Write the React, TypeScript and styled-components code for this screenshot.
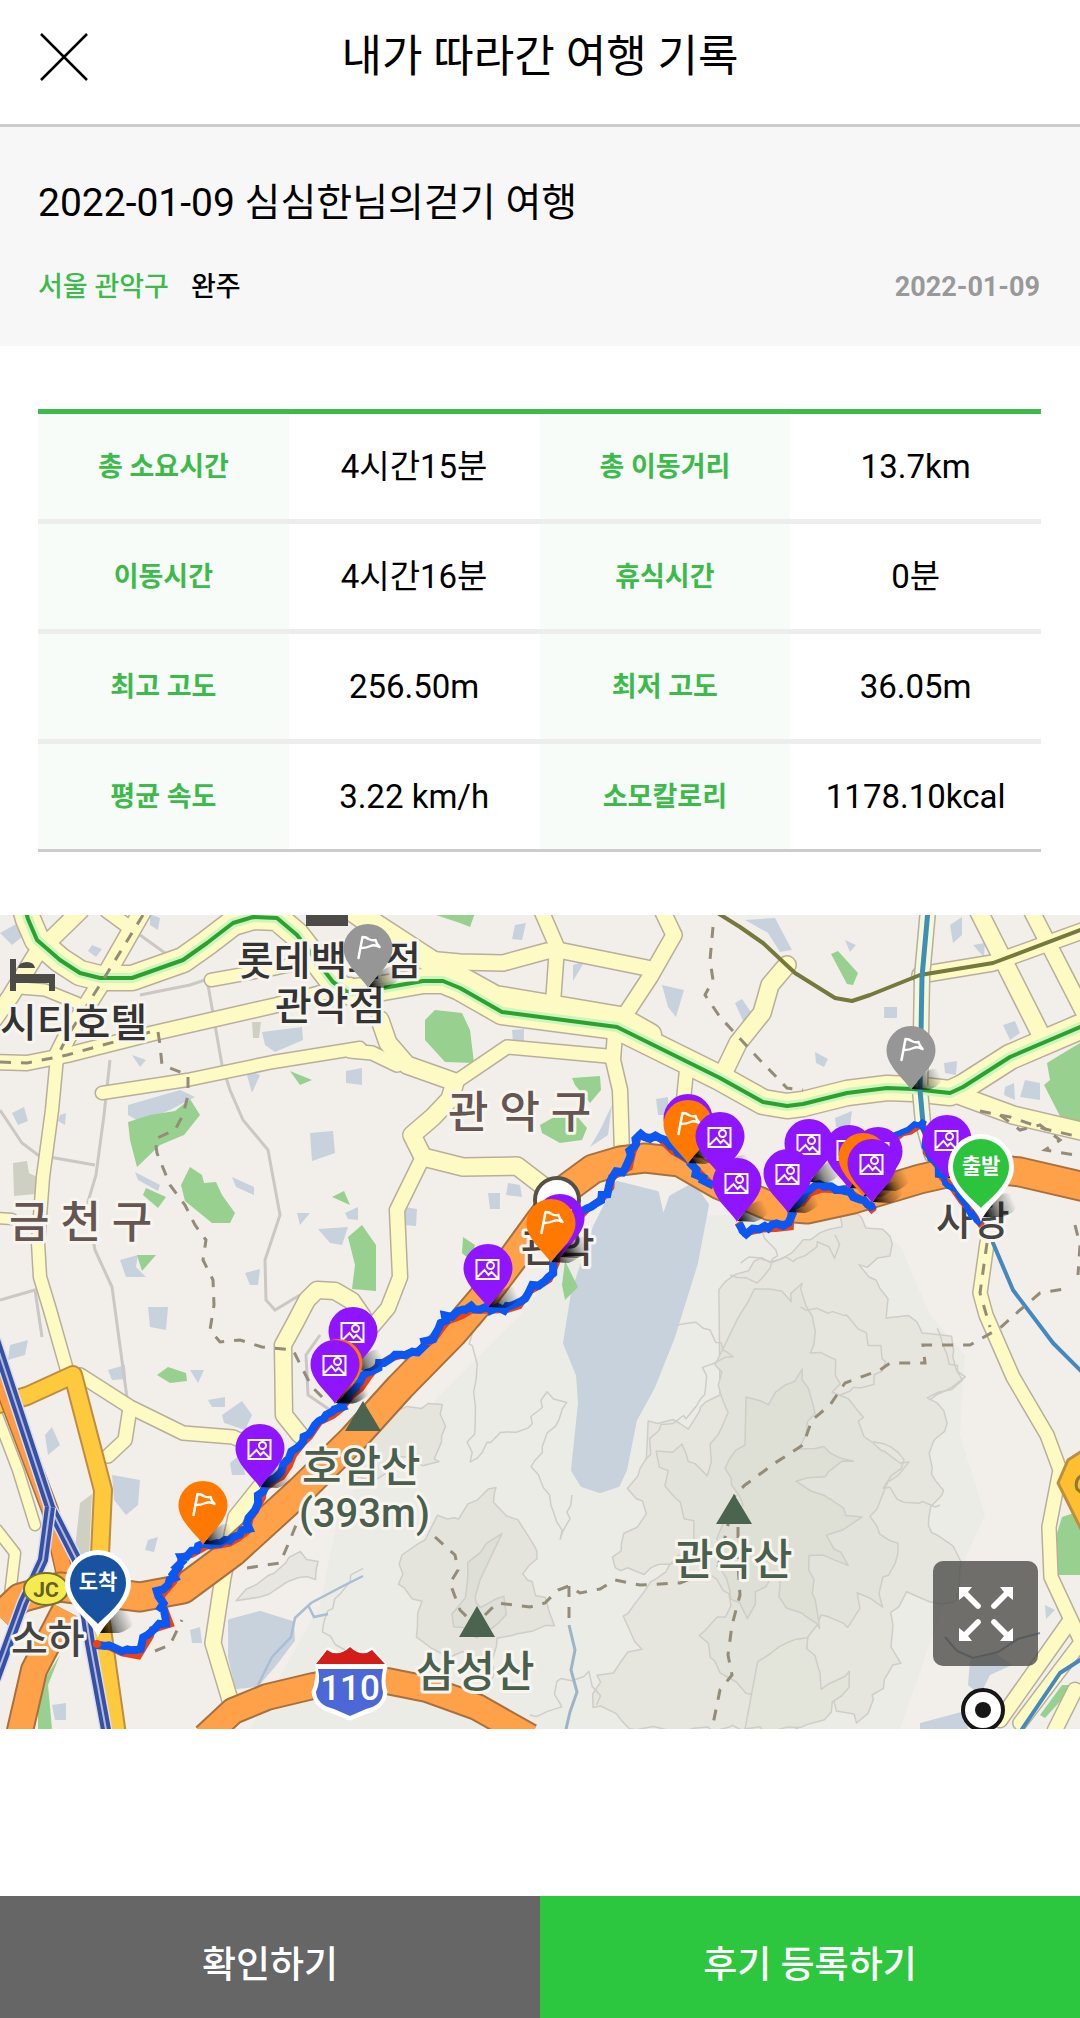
import React from 'react';
import styled, { createGlobalStyle } from 'styled-components';

const GlobalStyle = createGlobalStyle`
  *, *::before, *::after { box-sizing: border-box; }
  body {
    margin: 0;
    background: #fff;
    color: #000;
    font-family: Roboto, "Noto Sans CJK KR", sans-serif;
  }
  button { font: inherit; border: 0; padding: 0; cursor: pointer; }
`;

const Page = styled.div`
  display: flex;
  flex-direction: column;
  min-height: 100vh;
`;

const Header = styled.header`
  display: grid;
  grid-template-columns: 48px 1fr 48px;
  align-items: center;
  height: 127px;
  padding: 0 40px 10px;
  border-bottom: 3px solid #ccc;
`;

const CloseButton = styled.button`
  display: flex;
  background: none;
`;

const PageTitle = styled.h1`
  margin: 0;
  font-size: 44px;
  line-height: 60px;
  font-weight: 400;
  text-align: center;
`;

const Summary = styled.section`
  display: flex;
  flex-direction: column;
  gap: 34px;
  padding: 46px 40px 39px 38px;
  background: #f7f7f7;
`;

const TripTitle = styled.h2`
  margin: 0;
  font-size: 39px;
  line-height: 60px;
  font-weight: 400;
`;

const Meta = styled.div`
  display: flex;
  gap: 22px;
  font-size: 27px;
  line-height: 40px;
  font-weight: 500;
`;

const Region = styled.span`
  color: #3cbb4b;
`;

const TripDate = styled.time`
  margin-left: auto;
  color: #999;
  font-weight: 700;
`;

const StatsSection = styled.section`
  padding: 63px 39px 63px 38px;
`;

const StatsTable = styled.table`
  width: 100%;
  table-layout: fixed;
  border-spacing: 0;
  border-top: 5px solid #3cbb4b;
`;

const StatRow = styled.tr`
  > * {
    height: 110px;
    padding: 0;
    line-height: 40px;
    text-align: center;
    border-bottom: 5px solid #ededed;
  }
  &:last-child > * {
    height: 108px;
    border-bottom: 3px solid #ccc;
  }
`;

const StatLabel = styled.th`
  background: #f7fcf8;
  color: #3cbb4b;
  font-size: 27px;
  font-weight: 700;
`;

const StatValue = styled.td`
  font-size: 33px;
`;

const MapFrame = styled.section`
  position: relative;
  aspect-ratio: 1080 / 814;
  overflow: hidden;
  background: #f2efe9;
`;

const MapDrawing = styled.svg`
  display: block;
  width: 100%;
  height: 100%;
`;

const PinButton = styled.button<{ $x: number; $y: number }>`
  position: absolute;
  left: ${p => (p.$x / 1080) * 100}%;
  top: ${p => (p.$y / 814) * 100}%;
  display: flex;
  background: none;
  transform: translate(-50%, -100%);
  svg { display: block; overflow: visible; }
`;

const EndText = styled.span`
  position: absolute;
  top: 18px;
  left: 0;
  width: 100%;
  color: #fff;
  font-size: 21px;
  line-height: 28px;
  font-weight: 700;
  text-align: center;
`;

const ExpandButton = styled.button`
  position: absolute;
  right: 42px;
  bottom: 63px;
  display: grid;
  place-items: center;
  width: 105px;
  height: 105px;
  border-radius: 10px;
  background: rgba(78, 77, 74, 0.8);
`;

const Actions = styled.footer`
  display: grid;
  grid-template-columns: 1fr 1fr;
  margin-top: auto;
`;

const ActionButton = styled.button<{ $primary?: boolean }>`
  height: 122px;
  padding-top: 10px;
  background: ${p => (p.$primary ? '#2cc73e' : '#666')};
  color: #fff;
  font-size: 37px;
  font-weight: 500;
`;

const stats = [
  ['총 소요시간', '4시간15분', '총 이동거리', '13.7km'],
  ['이동시간', '4시간16분', '휴식시간', '0분'],
  ['최고 고도', '256.50m', '최저 고도', '36.05m'],
  ['평균 속도', '3.22 km/h', '소모칼로리', '1178.10kcal'],
];

type Pt = [number, number];

const pts = (s: string): Pt[] =>
  s.split(' ').map(p => p.split(',').map(Number) as Pt);

const noise = (seed: number) => {
  let s = seed * 9301 + 49297;
  return () => {
    s = (s * 9301 + 49297) % 233280;
    return s / 233280 - 0.5;
  };
};

/* Breaks a line into short steps, each shifted a little, like a GPS track. */
const track = (s: string, seed: number, amp: number, step = 5) => {
  const src = pts(s);
  const r = noise(seed);
  const out: string[] = [];
  src.slice(1).forEach((b, i) => {
    const a = src[i];
    const n = Math.max(1, Math.round(Math.hypot(b[0] - a[0], b[1] - a[1]) / step));
    for (let k = 0; k < n; k++) {
      out.push(
        `${(a[0] + ((b[0] - a[0]) * k) / n + r() * amp).toFixed(1)},${(a[1] + ((b[1] - a[1]) * k) / n + r() * amp).toFixed(1)}`,
      );
    }
  });
  out.push(src[src.length - 1].join(','));
  return out.join(' ');
};

const greenLine =
  '24,-10 28,4 37,25 60,45 80,58 100,63 132,63 183,45 207,28 233,8 253,2 277,3 297,20 333,67 347,77 383,73 423,66 443,66 460,73 502,97 617,112 720,163 763,187 787,191 803,189 847,178 887,173 913,174 950,178 963,172 1010,142 1080,112';
const oliveLine =
  '716,-3 740,12 763,28 795,58 835,83 852,86 870,80 920,60 993,48 1080,15';
const mainHighway =
  '0,702 20,683 60,672 140,682 183,674 233,637 300,576 353,524 400,472 453,418 482,384 513,343 540,306 563,276 593,254 620,246 645,243 680,247 720,270 770,291 807,294 853,284 920,264 973,252 1020,257 1085,272';
const river = '928,-5 922,62 920,175 923,208 932,240';
const southHighway =
  '205,822 233,796 267,782 313,771 350,765 387,766 427,774 477,792 530,822';

const roads: [string, number][] = [
  [greenLine, 24],
  ['340,-14 367,5 430,46 495,82 620,103 650,120', 22],
  ['427,44 460,47 503,48 547,36 563,36 647,53', 15],
  ['541,-5 557,32 553,88', 14],
  ['662,-5 674,20 650,62 625,100', 15],
  ['615,118 613,145 620,175 622,238', 14],
  ['607,141 507,132 460,164', 13],
  ['380,105 388,128 407,150 455,167 450,184 433,202 412,220 423,242 463,252 517,251 547,274', 17],
  ['350,136 372,138 397,150', 13],
  ['421,246 397,295 400,362 388,393 372,412', 14],
  ['102,178 187,165 273,147 360,133', 12],
  ['-5,147 27,148 67,140 150,119 277,90 350,70', 14],
  ['211,65 277,53 345,38', 12],
  ['57,142 52,195 43,262 38,328 40,362 50,395 67,455', 12],
  ['143,-5 103,65 67,122 57,142', 17],
  ['80,-4 37,38 10,82 -6,104', 16],
  ['20,73 45,75 77,88', 11],
  ['107,-4 133,15', 13],
  ['363,402 352,386 335,376 317,375 307,385 295,408 283,430 284,500 300,520', 16],
  ['80,460 130,492 183,518 233,522 262,535', 13],
  ['130,493 125,525 108,541', 13],
  ['260,572 236,602 223,662 213,728 233,795', 15],
  ['978,-5 1045,128', 17],
  ['1031,-5 1085,100', 15],
  ['920,60 993,48 1085,15', 15],
  ['787,50 770,70 762,98 738,128 724,157', 17],
  ['687,150 683,190', 13],
  ['953,178 1013,200 1085,217', 17],
  ['987,328 980,378 986,400 1013,462 1047,520 1060,555 1049,612 1051,662 1085,735', 13],
  ['1070,706 1000,805', 14],
  ['1085,722 1020,808', 13],
  ['1075,775 1055,815', 14],
  ['-3,615 15,638 10,680', 10],
  ['-3,500 18,555 35,610', 10],
  ['-3,303 12,304', 10],
];

const lanes = [
  '110,145 104,200 96,260 87,290 95,335 112,372 128,490',
  '208,70 222,150 230,175 243,205 268,235 280,300 265,345 266,385 275,395 300,380',
  '0,195 22,228 38,240 95,250',
  '0,385 35,375 42,422',
  '140,80 190,70 214,62',
  '140,20 165,38',
  '320,420 306,440 308,480 330,495',
];

const greens = [
  '128,207 150,200 175,196 190,184 200,200 184,220 160,230 137,252 130,225',
  '190,252 202,260 204,268 216,267 222,280 235,298 230,308 212,308 185,286 181,270',
  '146,273 166,282 158,293 143,280',
  '137,340 156,340 142,356',
  '290,156 312,165 300,170',
  '332,282 344,276 350,290',
  '348,322 362,310 376,330 376,376 352,374 355,350',
  '425,105 435,95 462,98 470,115 474,148 445,147 425,125',
  '572,163 600,161 601,175 590,188 575,170',
  '540,210 570,193 587,213 582,225 560,228 542,218',
  '831,39 838,36 858,58 853,70 847,69',
  '1080,128 1060,140 1047,148 1050,165 1044,170 1062,205 1080,209',
  '565,346 578,372 565,385 562,370',
  '157,460 168,452 186,458 187,466 170,468',
  '1080,596 1062,602 1055,625 1056,660 1080,660',
  '463,322 475,330 470,345 462,338',
  '430,-2 475,-2 470,12 460,8',
  '1075,770 1045,803 1040,800 1062,770',
  '60,740 48,770 52,814 38,814 38,775',
];

const waters = [
  '617,268 657,278 663,305 671,282 693,270 707,290 696,348 673,422 653,472 635,505 625,555 618,570 600,576 582,570 573,555 580,488 578,460 565,428 573,378 595,312',
  '230,706 260,698 292,708 293,725 274,750 257,770 237,772 230,742',
];

const buildings = [
  '0,18 18,8 22,22 12,30', '92,30 102,34 96,42 88,36', '262,117 302,112 303,125 275,137 265,130',
  '310,218 333,216 335,238 312,246', '346,156 362,153 362,170 346,168', '128,190 180,175 195,182 170,195 140,207 128,200',
  '132,140 146,145 140,152', '12,198 24,192 28,206 18,210', '318,314 348,312 342,330 330,328',
  '245,153 260,160 252,178', '232,262 254,272 254,280 236,272', '135,257 160,270 158,276 138,265',
  '345,298 358,292 358,305 348,304', '297,298 310,298 300,310', '120,345 138,340 136,352 146,362 126,362',
  '245,358 260,354 258,370 250,370', '148,392 168,392 166,415 150,412', '60,200 66,198 65,210 58,206',
  '515,10 526,8 522,25 512,24', '512,115 524,114 524,128 513,128', '488,278 500,278 500,294 490,294',
  '404,292 417,294 416,311 404,310', '508,268 520,270 522,282 506,280', '600,215 612,190 608,220 590,232',
  '656,184 668,182 668,200 658,200', '662,70 684,75 676,102 668,92', '573,50 585,46 573,66',
  '845,25 856,30 850,37', '884,92 897,92 897,103 884,103', '735,88 742,84 753,100 745,110',
  '815,137 828,144 824,152 816,148', '1003,110 1015,106 1020,118 1010,125', '950,10 962,2 962,20 953,28',
  '973,30 985,28 984,42', '1025,165 1040,168 1040,185 1020,182', '835,203 852,196 850,212 836,212',
  '944,148 957,146 956,160 945,158', '745,5 775,3 792,35 780,37 768,18', '1005,172 1014,168 1015,185 1004,180',
  '108,455 125,450 126,464 112,465', '112,560 140,565 138,590 126,600 114,585', '45,520 52,512 60,530 48,540',
  '222,500 242,486 252,500 245,515 224,508', '230,548 242,538 245,560 232,560', '148,625 158,622 154,637 145,635',
  '190,715 200,712 202,728 192,728', '10,430 28,425 25,440 8,445', '208,485 225,482 225,492 212,492',
  '970,745 995,738 1012,750 990,760 980,780 968,770', '920,808 965,796 968,814 920,814', '1045,690 1055,695 1046,704',
  '150,-1 160,3 158,15 150,10', '190,455 204,455 198,468', '52,790 66,788 66,805 55,805',
];

const slopes: [string, string, number][] = [
  ['720,378 728,365 748,355 760,340 778,345 798,328 815,325 842,312 842,290 860,305 890,320 892,345 860,352 880,375 890,400 905,400 925,415 950,425 963,465 930,480 950,505 925,540 945,575 925,610 965,645 958,680 930,690 905,680 890,700 897,745 880,770 860,805 820,780 800,814 640,814 595,790 600,760 640,735 620,705 650,670 690,640 640,655 612,655 620,625 645,600 630,570 645,540 650,505 690,510 700,490 720,480', '#e6e6df', 2],
  ['740,400 755,375 770,370 790,385 800,365 815,410 810,440 840,445 835,480 865,500 860,520 905,550 885,580 870,600 900,640 880,665 885,690 860,680 850,710 820,700 800,740 790,800 720,760 700,720 735,690 700,650 690,610 670,580 660,540 680,530 705,560 715,520 730,500 715,450', '#e2e3db', 3],
  ['750,480 770,490 785,470 800,455 815,500 800,530 855,545 800,570 860,605 830,620 845,650 810,640 823,710 790,690 770,660 745,700 725,665 720,620 740,590 725,550 745,530', '#dedfd5', 4],
  ['760,745 805,720 822,770 850,760 830,800 800,814 745,814', '#e3e4da', 9],
  ['434,600 455,607 475,585 495,570 495,590 515,605 530,628 540,635 520,655 545,685 555,710 530,715 500,725 490,765 465,740 440,740 412,725 420,690 400,670 405,640 425,625', '#e4e3dc', 5],
  ['500,620 472,645 465,670 450,710 480,720 510,700 505,685 475,690 480,665', '#dedfd6', 6],
  ['385,500 440,488 448,510 435,550 400,540 375,570 350,560', '#e5e4dd', 7],
  ['237,682 275,655 300,640 322,645 315,665 285,665 260,682', '#e8e6e0', 8],
];

const ridges = [
  '480,402 472,425 476,470 468,545 500,520 525,515 548,480 565,485 545,530 530,555 552,590 564,625 572,580',
  '675,412 700,405 712,425 730,440 705,450 708,480 690,500 660,510 645,545',
  '800,395 850,400 888,447 870,470 840,480',
  '938,410 945,440 965,465 930,485',
  '875,525 905,545 880,570 915,590 940,590',
  '600,790 590,760 555,770 560,795 530,800',
  '360,655 330,690 320,720 345,735',
  '760,320 780,340 755,365 730,360',
  '740,345 800,345 820,330 838,340 835,320',
];

const trails = [
  '158,117 160,130 162,150 188,160 188,180 183,200 175,215 155,224 157,238 170,270 185,290 195,310 206,325 203,345 213,365 214,390 210,415 220,427 240,425 262,432 293,435 303,455 312,472 325,485',
  '435,622 455,640 458,655 450,668 460,695 470,705',
  '485,700 497,688 530,692 545,688 558,675 569,671 580,678 600,674 615,665 640,670 680,668 700,660',
  '569,671 569,710', '718,652 735,580 745,570 775,548 803,530 812,505 830,490 845,468 880,455 890,448 925,448 923,430 970,430 1000,413 1020,395 1040,378 1070,373',
  '738,612 738,650 740,680 732,710 728,740 732,760 720,775 712,814',
  '713,12 710,45 713,65 705,80 720,102 757,142 787,173 803,175',
  '247,653 280,648 290,625 298,605', '180,685 200,670 225,655', '155,736 170,730 182,705',
  '980,196 1010,202 1045,214 1080,222', '1000,200 1020,215 1040,210 1060,225 1045,235 1075,240', '1075,310 1080,330 1078,360',
];

const route = [
  '97,729 110,732 137,737 147,720 153,713 168,708 163,692 159,678 173,663 183,642 203,630 227,626 247,612 255,592 263,572 280,558 293,538 307,518 320,507 340,492 367,458 390,443 420,435 433,422 447,402 470,392 493,395 517,390 530,375 550,362 553,345 563,315 587,292 603,282 613,262 627,252 630,235 640,220 660,223 673,233 687,242 697,258 713,270',
  '737,308 743,318 763,313 787,308 792,292 807,275 820,270 847,277 863,285 873,295',
  '890,224 900,218 922,207 927,235 943,262 960,282 981,309',
];

const placeNames: [string, number, number, number, string][] = [
  ['시티호텔', 0, 122, 40, '#333'],
  ['롯데백화점', 237, 60, 40, '#333'],
  ['관악점', 275, 105, 40, '#333'],
  ['금 천 구', 9, 323, 44, '#655653'],
  ['관 악 구', 448, 213, 44, '#655653'],
  ['관악', 521, 347, 40, '#4b423f'],
  ['사당', 936, 320, 40, '#444'],
  ['소하', 11, 738, 40, '#444'],
  ['호암산', 302, 567, 43, '#4a5f4e'],
  ['(393m)', 299, 612, 40, '#4a5f4e'],
  ['삼성산', 416, 772, 43, '#4a5f4e'],
  ['관악산', 674, 660, 43, '#4a5f4e'],
];

const MapArtwork = () => (
  <MapDrawing viewBox="0 0 1080 814" preserveAspectRatio="xMidYMid slice" aria-hidden="true">
    <rect width="1080" height="814" fill="#f2efea" />
    <path d="M440 814L250 814L320 690L340 590L440 480L520 400L600 300L720 300L850 300L900 330L930 400L965 440L960 520L985 600L940 700L900 814Z" fill="#ecece7" />
    <g stroke="#cfcdc8" strokeWidth="1.5" strokeLinejoin="round">
      {slopes.map(([p, fill, seed]) => <polygon key={p} points={track(p, seed, 9, 11)} fill={fill} />)}
      {ridges.map((p, i) => <polyline key={p} points={track(p, i + 5, 8, 9)} fill="none" />)}
    </g>
    <g fill="#c7d2dd">
      {waters.map(p => <polygon key={p} points={p} strokeLinejoin="round" stroke="#c7d2dd" strokeWidth="4" />)}
      {buildings.map(p => <polygon key={p} points={p} />)}
    </g>
    <g fill="#cfd0c4">
      <path d="M13 248l14-2 2 12 8 4-1 17-22 2zM80 588l12-9-3 65-15-2zM252 107h9l-2 16h-6z" />
    </g>
    <g fill="#98d08f">{greens.map(p => <polygon key={p} points={p} />)}</g>
    <path d="M258 770l14-28 19-20 4-19 16-15 32-17 20-10M308 690l6 12 14-3" fill="none" stroke="#a9bdd4" strokeWidth="2.5" />
    <path d="M945 722l12 14 16 7 25-6 20-13 22-6" fill="none" stroke="#8093a8" strokeWidth="2" />
    <path d="M569 710l6 25-4 20 6 22-7 20-4 17" fill="none" stroke="#9bb5c8" strokeWidth="3" />
    <g fill="none" stroke="#cbc8c4" strokeWidth="3">{lanes.map(p => <polyline key={p} points={p} />)}</g>

    <g fill="none" strokeLinejoin="round" strokeLinecap="round">
      {roads.map(([p, w]) => <polyline key={p} points={p} stroke="#b8ae9c" strokeWidth={w + 3} />)}
      {roads.map(([p, w]) => <polyline key={p} points={p} stroke="#fefac4" strokeWidth={w} />)}
      <polyline points={river} stroke="#b8ae9c" strokeWidth="17" />
      <polyline points={river} stroke="#f6f8dc" strokeWidth="14" />
      <polyline points={greenLine} stroke="#cdf5bd" strokeWidth="10" />
      <polyline points={greenLine} stroke="#2ba22e" strokeWidth="4" />
      <polyline points={oliveLine} stroke="#75793c" strokeWidth="4" />
      <polyline points={river} stroke="#3f8eb4" strokeWidth="5" />
      <polyline points="993,328 1013,375 1053,428 1085,460" stroke="#4389c0" strokeWidth="4" />
      <polyline points="1022,814 1060,758 1085,742" stroke="#4389c0" strokeWidth="4" />
    </g>
    <g fill="none" stroke="#948b78" strokeWidth="3" strokeDasharray="11 10">
      {trails.map(p => <polyline key={p} points={p} />)}
      <polyline points="143,0 103,65 67,122 57,142" />
      <polyline points="0,147 27,148 67,140 150,117" />
      <polyline points="987,328 980,378 990,412" />
    </g>

    <g fill="none" strokeLinejoin="round">
      <polyline points="-5,490 27,481 73,460 103,575 100,640 100,700 117,820" stroke="#bf8d3f" strokeWidth="20" />
      <polyline points="-5,490 27,481 73,460 103,575 100,640 100,700 117,820" stroke="#fec93d" strokeWidth="16" />
      <polygon points="1085,534 1068,545 1058,568 1085,622" fill="#fec02e" stroke="#bf8d3f" strokeWidth="3" />
      <path d="M1082 560q-8 5-5 14l7 6" stroke="#8b7a3a" strokeWidth="3" />
      <polyline points="-5,450 50,595 66,665" stroke="#a8703d" strokeWidth="18" />
      <polyline points="-5,450 50,595 66,665" stroke="#ff9c44" strokeWidth="15" />
      <polyline points="19,820 34,755 65,695" stroke="#a8703d" strokeWidth="28" />
      <polyline points={southHighway} stroke="#a8703d" strokeWidth="28" />
      <polyline points={mainHighway} stroke="#a8703d" strokeWidth="31" />
      <polyline points={mainHighway} stroke="#ffa149" strokeWidth="27" />
      <polyline points={southHighway} stroke="#ffa149" strokeWidth="24" />
      <polyline points="19,820 34,755 65,695" stroke="#ffa149" strokeWidth="24" />
      {['-5,425 50,592 77,645 90,728 107,820', '50,592 43,645 23,688 -5,765'].map(p => (
        <g key={p}>
          <polyline points={p} stroke="#d9dcea" strokeWidth="13" />
          <polyline points={p} stroke="#3850a4" strokeWidth="10" />
          <polyline points={p} stroke="#aebbe0" strokeWidth="2" />
        </g>
      ))}
    </g>

    <circle cx="557" cy="285" r="22" fill="#fff" stroke="#555048" strokeWidth="4" />
    <ellipse cx="46" cy="674" rx="22" ry="16" fill="#f4ec4f" stroke="#77712d" strokeWidth="2" />
    <text x="46" y="682" textAnchor="middle" fontFamily="Roboto, sans-serif" fontSize="21" fontWeight="700" fill="#655f25">JC</text>
    <path d="M10 44h6v15h39v17h-6v-8H16v8h-6zM18 53q1-6 9-6 7 0 8 6zM306 0h42v11h-42z" fill="#4c4b48" />

    <g fill="#4a644f">
      <path d="M363 486l18 30h-36zM477 691l18 31h-36zM734 579l18 30h-36z" />
    </g>
    <g fontFamily='Roboto, "Noto Sans CJK KR", sans-serif' fontWeight="500" stroke="#f7f5ee" strokeWidth="6" strokeLinejoin="round" paintOrder="stroke">
      {placeNames.map(([name, x, y, size, fill]) => (
        <text key={name} x={x} y={y} fontSize={size} fill={fill}>{name}</text>
      ))}
    </g>

    <path d="M318 750l10-15 9 4q7 1 12-5 7 6 14 5l9-4 13 17q-4 15 0 25-2 15-18 19l-17 7-17-7q-17-4-19-19 5-11 4-27z" fill="#fff" stroke="#fff" strokeWidth="5" strokeLinejoin="round" />
    <path d="M316 749l11-14q11 8 23-3 12 11 22 3l13 14z" fill="#d31d18" />
    <path d="M318 754h65q-3 13 0 23 0 13-17 17l-16 7-16-7q-17-4-18-17 5-11 2-23z" fill="#4c68d6" />
    <text x="350" y="785" textAnchor="middle" fontFamily="Roboto, sans-serif" fontSize="35" fontWeight="500" fill="#fff">110</text>
    <circle cx="983" cy="795" r="20" fill="#fff" stroke="#161616" strokeWidth="4" />
    <circle cx="983" cy="795" r="8" fill="#161616" />

    <g fill="none" strokeLinejoin="miter">
      {route.map((p, i) => (
        <g key={p}>
          <polyline points={track(p, i + 31, 5, 14)} transform="translate(1 2)" stroke="#f03f12" strokeWidth="7" />
          <polyline points={track(p, i + 4, 5)} stroke="#0b57f4" strokeWidth={i === 2 ? 6 : 8} />
        </g>
      ))}
    </g>
    <circle cx="97" cy="729" r="4" fill="#f03f12" />
  </MapDrawing>
);

type Kind = 'photo' | 'course' | 'off';

const pinColor: Record<Kind, string> = { photo: '#8f14ff', course: '#ff7800', off: '#969696' };
const pinName: Record<Kind, string> = { photo: '사진', course: '코스 지점', off: '미방문 지점' };

const pins: [Kind, number, number][] = [
  ['off', 368, 73],
  ['off', 911, 175],
  ['photo', 688, 243],
  ['course', 688, 249],
  ['photo', 720, 261],
  ['photo', 737, 307],
  ['photo', 809, 268],
  ['photo', 788, 298],
  ['photo', 849, 274],
  ['photo', 878, 276],
  ['course', 863, 282],
  ['photo', 872, 288],
  ['photo', 947, 264],
  ['photo', 560, 343],
  ['course', 551, 348],
  ['photo', 488, 393],
  ['photo', 353, 456],
  ['course', 338, 488],
  ['photo', 335, 489],
  ['photo', 260, 573],
  ['course', 203, 630],
];

const Defs = () => (
  <svg width="0" height="0" style={{ position: 'absolute' }} aria-hidden="true">
    <defs>
      <linearGradient id="pinShade" x1="0" y1="0.6" x2="1" y2="0.3">
        <stop offset="0" stopColor="#000" stopOpacity="0.9" />
        <stop offset="0.4" stopColor="#000" stopOpacity="0.4" />
        <stop offset="0.9" stopColor="#000" stopOpacity="0" />
      </linearGradient>
    </defs>
  </svg>
);

const Pin = ({ kind, x, y }: { kind: Kind; x: number; y: number }) => (
  <PinButton $x={x} $y={y} aria-label={pinName[kind]}>
    <svg width="49" height="64" viewBox="0 0 49 64" fill="none">
      <path d="M25 63L36 48Q50 38 57 47Q58 58 42 64Z" fill="url(#pinShade)" />
      <path d="M24.500 64C22 57 0 41 0 24.500a24.500 24.500 0 0 1 49 0C49 41 27 57 24.500 64z" fill={pinColor[kind]} />
      {kind === 'photo' ? (
        <g stroke="#fff" strokeWidth="2">
          <path d="M13 16h22v19H13zM14 33l7-7 4 5 3-3 6 6" />
          <circle cx="27" cy="21.500" r="3.500" />
        </g>
      ) : (
        <path d="M15 34l4-21q4 0 6 2 4 2 7 1 1 4 4 7-5-3-9-1-4 2-9 2" stroke="#fff" strokeWidth="2.500" strokeLinejoin="round" strokeLinecap="round" />
      )}
    </svg>
  </PinButton>
);

const EndPin = ({ label, color, x, y }: { label: string; color: string; x: number; y: number }) => (
  <PinButton $x={x} $y={y}>
    <svg width="66" height="88" viewBox="0 0 66 88" aria-hidden="true">
      <path d="M35 83L48 63Q62 54 69 66Q71 78 54 83Z" fill="url(#pinShade)" />
      <path d="M33 88C30 73 0 57 0 33a33 33 0 0 1 66 0C66 57 36 73 33 88z" fill="#fff" />
      <path d="M33 74C27 67 5 52 5 33a28 28 0 0 1 56 0C61 52 39 67 33 74z" fill={color} />
    </svg>
    <EndText>{label}</EndText>
  </PinButton>
);

const ExpandIcon = () => (
  <svg width="54" height="54" viewBox="0 0 54 54" aria-hidden="true">
    {[0, 90, 180, 270].map(a => (
      <g key={a} transform={`rotate(${a} 27 27)`}>
        <path d="M0 0h13l-4 5 12 12a2 2 0 0 1-4 4L5 9l-5 4z" fill="#fff" />
      </g>
    ))}
  </svg>
);

export default function App() {
  return (
    <Page>
      <GlobalStyle />
      <Header>
        <CloseButton aria-label="닫기">
          <svg width="48" height="48" viewBox="0 0 48 48" aria-hidden="true">
            <path d="M1 1l46 46M47 1L1 47" stroke="#000" strokeWidth="2.500" />
          </svg>
        </CloseButton>
        <PageTitle>내가 따라간 여행 기록</PageTitle>
      </Header>
      <Summary>
        <TripTitle>2022-01-09 심심한님의걷기 여행</TripTitle>
        <Meta>
          <Region>서울 관악구</Region>
          <span>완주</span>
          <TripDate dateTime="2022-01-09">2022-01-09</TripDate>
        </Meta>
      </Summary>
      <StatsSection>
        <StatsTable>
          <tbody>
            {stats.map(([l1, v1, l2, v2]) => (
              <StatRow key={l1}>
                <StatLabel scope="row">{l1}</StatLabel>
                <StatValue>{v1}</StatValue>
                <StatLabel scope="row">{l2}</StatLabel>
                <StatValue>{v2}</StatValue>
              </StatRow>
            ))}
          </tbody>
        </StatsTable>
      </StatsSection>
      <MapFrame aria-label="이동 경로 지도">
        <Defs />
        <MapArtwork />
        {pins.map(([kind, x, y]) => (
          <Pin key={`${x}-${y}`} kind={kind} x={x} y={y} />
        ))}
        <EndPin label="출발" color="#2cc43c" x={981} y={307} />
        <EndPin label="도착" color="#1853a2" x={98} y={723} />
        <ExpandButton aria-label="지도 크게 보기">
          <ExpandIcon />
        </ExpandButton>
      </MapFrame>
      <Actions>
        <ActionButton>확인하기</ActionButton>
        <ActionButton $primary>후기 등록하기</ActionButton>
      </Actions>
    </Page>
  );
}
